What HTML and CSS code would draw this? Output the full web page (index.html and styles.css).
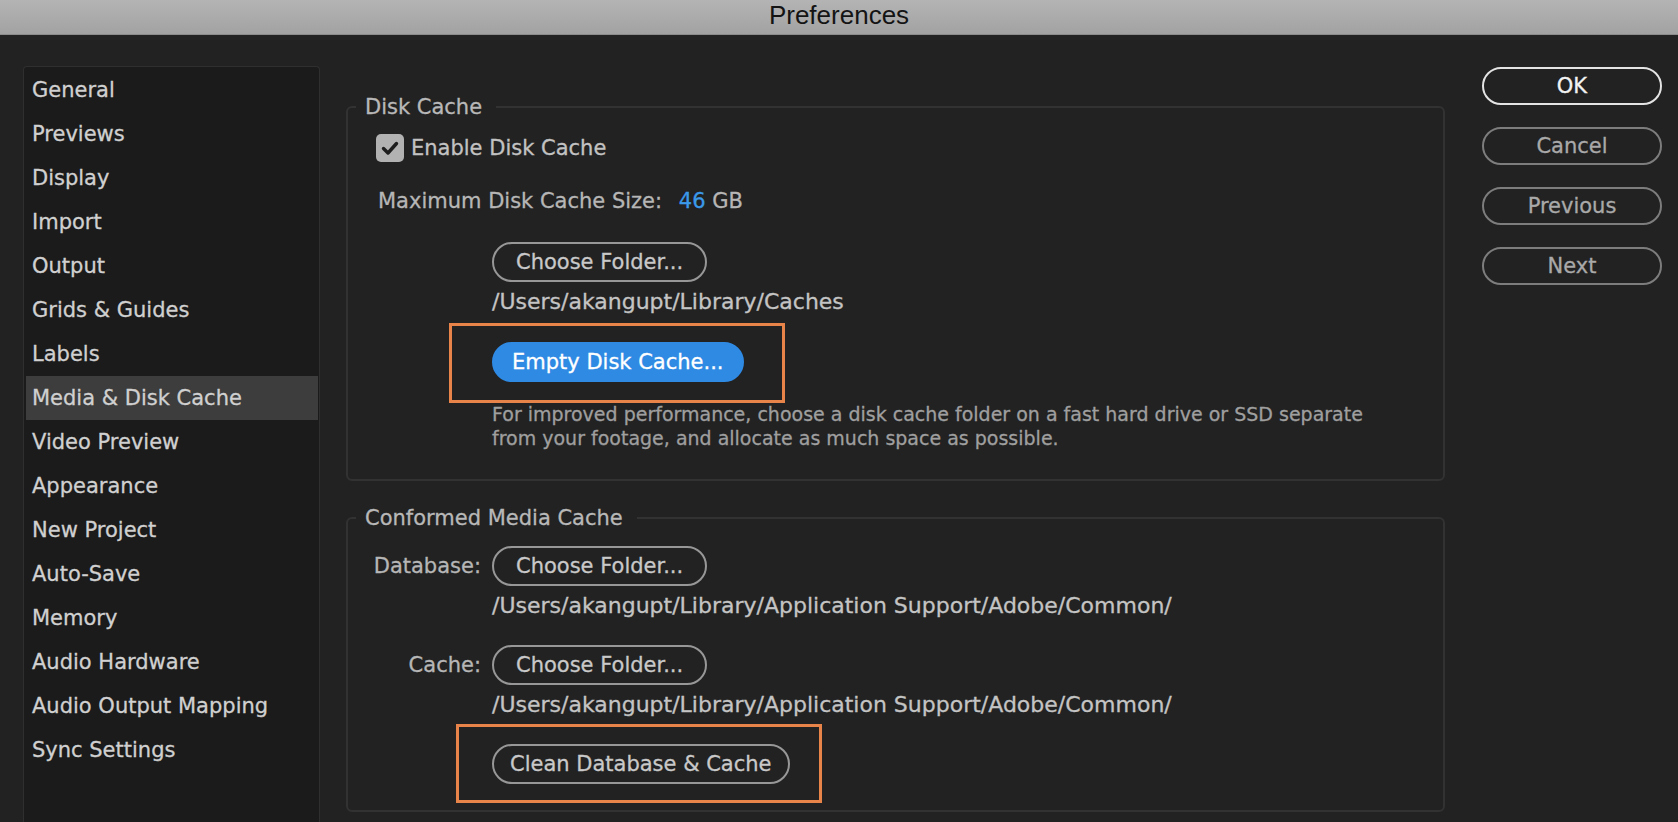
FILE: index.html
```html
<!DOCTYPE html>
<html lang="en">
<head>
<meta charset="utf-8">
<title>Preferences</title>
<link rel="stylesheet" href="styles.css">
</head>
<body>
<header class="titlebar">Preferences</header>
<div class="window">
  <nav class="sidebar">
    <div class="item">General</div>
    <div class="item">Previews</div>
    <div class="item">Display</div>
    <div class="item">Import</div>
    <div class="item">Output</div>
    <div class="item">Grids &amp; Guides</div>
    <div class="item">Labels</div>
    <div class="item active">Media &amp; Disk Cache</div>
    <div class="item">Video Preview</div>
    <div class="item">Appearance</div>
    <div class="item">New Project</div>
    <div class="item">Auto-Save</div>
    <div class="item">Memory</div>
    <div class="item">Audio Hardware</div>
    <div class="item">Audio Output Mapping</div>
    <div class="item">Sync Settings</div>
  </nav>

  <main class="content">
    <fieldset class="group group-disk">
      <legend class="legend">Disk Cache</legend>
      <div class="check-row">
        <span class="checkbox"><svg width="28" height="28" viewBox="0 0 28 28"><path d="M7.5 14.5 L12 19 L20.5 9.5" fill="none" stroke="#1e1e1e" stroke-width="3.4" stroke-linecap="round" stroke-linejoin="round"/></svg></span>
        <span class="check-label">Enable Disk Cache</span>
      </div>
      <div class="size-row">Maximum Disk Cache Size: <span class="value">46</span> GB</div>
      <div class="indent">
        <button class="btn btn-folder">Choose Folder...</button>
        <div class="path path-first">/Users/akangupt/Library/Caches</div>
        <div class="highlight hl-empty"><button class="btn btn-primary">Empty Disk Cache...</button></div>
        <p class="note">For improved performance, choose a disk cache folder on a fast hard drive or SSD separate<br>from your footage, and allocate as much space as possible.</p>
      </div>
    </fieldset>

    <fieldset class="group group-media">
      <legend class="legend">Conformed Media Cache</legend>
      <div class="media-grid">
        <span class="row-label label-db">Database:</span>
        <button class="btn btn-folder btn-db">Choose Folder...</button>
        <div class="path path-db">/Users/akangupt/Library/Application Support/Adobe/Common/</div>
        <span class="row-label label-cache">Cache:</span>
        <button class="btn btn-folder btn-cache">Choose Folder...</button>
        <div class="path path-cache">/Users/akangupt/Library/Application Support/Adobe/Common/</div>
        <div class="highlight hl-clean"><button class="btn btn-clean">Clean Database &amp; Cache</button></div>
      </div>
    </fieldset>
  </main>

  <aside class="actions">
    <button class="act act-ok">OK</button>
    <button class="act">Cancel</button>
    <button class="act">Previous</button>
    <button class="act">Next</button>
  </aside>
</div>
</body>
</html>
```

FILE: styles.css
```css
* { box-sizing: border-box; }

html, body {
  margin: 0;
  height: 100%;
}

body {
  background: #222222;
  font-family: "DejaVu Sans", Verdana, sans-serif;
  color: #bdbdbd;
  overflow: hidden;
}

.titlebar {
  height: 35px;
  background: linear-gradient(#b4b4b4, #a2a2a2);
  border-bottom: 1px solid #8c8c8c;
  text-align: center;
  font-family: "Liberation Sans", Arial, sans-serif;
  font-size: 26px;
  line-height: 30px;
  color: #141414;
}

.window {
  display: flex;
  align-items: flex-start;
  padding: 31px 16px 0 23px;
  -webkit-text-stroke: 0.3px currentColor;
}

/* Sidebar */
.sidebar {
  flex: none;
  width: 297px;
  height: 790px;
  background: #1b1b1b;
  border: 1px solid #2f2f2f;
  border-bottom: none;
  border-radius: 4px 4px 0 0;
  padding-top: 1px;
}

.item {
  height: 44px;
  line-height: 44px;
  margin: 0 1px 0 2px;
  padding-left: 6px;
  font-size: 21px;
  color: #d0d0d0;
  white-space: nowrap;
}

.item.active {
  background: #3d3d3d;
}

/* Content */
.content {
  flex: none;
  width: 1099px;
  margin-left: 26px;
  padding-top: 29px;
}

.group {
  margin: 0;
  min-width: 0;
  border: 2px solid #323232;
  border-radius: 6px;
  padding: 0 0 0 28px;
}

.legend {
  margin-left: -20px;
  padding: 0 14px 0 9px;
  font-size: 21px;
  line-height: 24px;
  color: #b8b8b8;
}

.group-disk {
  padding-bottom: 29px;
}

.check-row {
  display: flex;
  align-items: center;
  height: 28px;
  margin-top: 15px;
}

.checkbox {
  width: 28px;
  height: 28px;
  border-radius: 5px;
  background: #b2b2b2;
  display: flex;
  -webkit-text-stroke: 0;
}

.check-label {
  margin-left: 7px;
  font-size: 21px;
  color: #c2c2c2;
}

.size-row {
  margin: 25px 0 0 2px;
  font-size: 21px;
  line-height: 28px;
  color: #b6b6b6;
}

.value {
  color: #3b99ea;
  margin-left: 10px;
}

.indent {
  margin-left: 116px;
  padding-top: 27px;
}

.btn {
  display: block;
  height: 40px;
  padding: 0 18px;
  border: 2px solid #979797;
  border-radius: 20px;
  background: transparent;
  color: #c9c9c9;
  font-family: "DejaVu Sans", Verdana, sans-serif;
  font-size: 21px;
  line-height: 36px;
  white-space: nowrap;
  -webkit-text-stroke: 0.3px currentColor;
}

.btn-folder {
  padding: 0 22px;
}

.btn-clean {
  padding: 0 16px;
}

.btn-primary {
  background: #2f8ae4;
  border-color: #2f8ae4;
  color: #ffffff;
}

.path {
  font-size: 22px;
  line-height: 24px;
  color: #c4c4c4;
  white-space: nowrap;
}

.path-first {
  margin-top: 8px;
}

.highlight {
  display: inline-block;
  border: 3px solid #e8834a;
}

.hl-empty {
  margin: 9px 0 0 -43px;
  padding: 16px 38px 18px 40px;
}

.note {
  margin: -1px 0 0;
  font-size: 19px;
  line-height: 24px;
  color: #9f9f9f;
}

/* Conformed media */
.group-media {
  margin-top: 25px;
  padding-bottom: 7px;
}

.media-grid {
  display: grid;
  grid-template-columns: 105px auto;
  column-gap: 11px;
  justify-items: start;
  align-items: center;
}

.row-label {
  justify-self: end;
  font-size: 21px;
  color: #b6b6b6;
}

.label-db, .btn-db { margin-top: 16px; }
.label-cache, .btn-cache { margin-top: 27px; }

.path-db, .path-cache {
  grid-column: 2;
  margin-top: 8px;
}

.hl-clean {
  grid-column: 2;
  margin: 7px 0 0 -36px;
  padding: 17px 29px 16px 33px;
}

/* Right buttons */
.actions {
  flex: none;
  width: 180px;
  margin-left: 37px;
  padding-top: 1px;
  display: flex;
  flex-direction: column;
  gap: 22px;
}

.act {
  height: 38px;
  border: 2px solid #7d7d7d;
  border-radius: 19px;
  background: transparent;
  color: #a9a9a9;
  font-family: "DejaVu Sans", Verdana, sans-serif;
  font-size: 21px;
  line-height: 34px;
  padding: 0;
  -webkit-text-stroke: 0.3px currentColor;
}

.act-ok {
  border-color: #e4e4e4;
  color: #f2f2f2;
}
```
